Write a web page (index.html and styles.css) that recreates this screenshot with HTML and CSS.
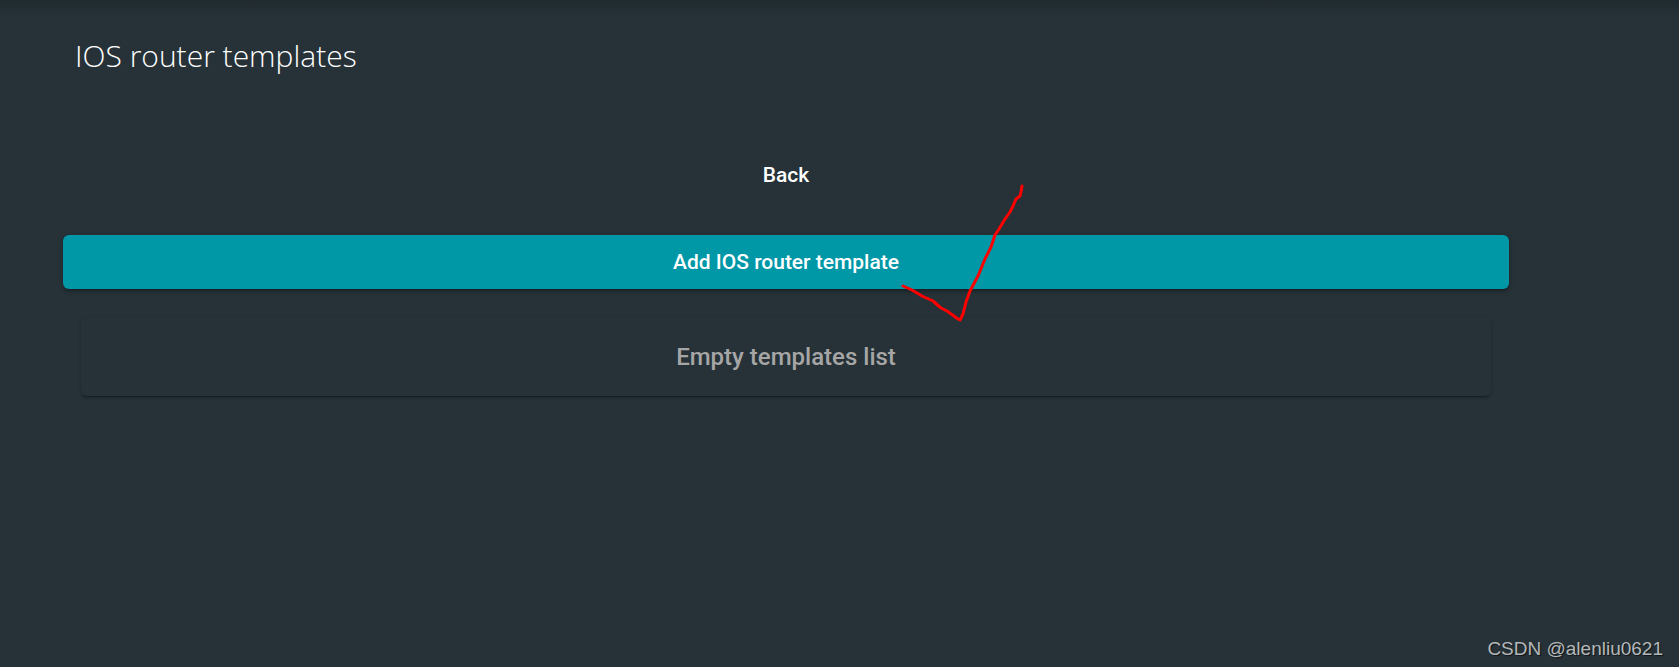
FILE: index.html
```html
<!DOCTYPE html>
<html lang="en">
  <head>
    <meta charset="utf-8">
    <meta name="viewport" content="width=device-width, initial-scale=1">
    <title>IOS router templates</title>
    <link rel="stylesheet" href="styles.css">
  </head>
  <body>
    <main class="content">
      <header class="page-header">
        <h1>IOS router templates</h1>
      </header>
      <div class="actions">
        <a href="#" class="button">Back</a>
        <button type="button" class="button button-primary">Add IOS router template</button>
        <svg class="tick" viewBox="0 0 130 138" width="130" height="138" aria-hidden="true">
          <path d="M7 100 L16 104 L26 110 L37 115 L45 122 L51 125 L58 130 L62 133 L64 134 L67 128 L70 116 L74 105 L82 90 L89 73 L95 61 L99 49 L103 43 L109 33 L114 26 L117 20 L120 13 L124 10 L125 6 L126 0"/>
        </svg>
      </div>
      <section class="card">
        <p>Empty templates list</p>
      </section>
    </main>
    <footer class="watermark">CSDN @alenliu0621</footer>
  </body>
</html>
```

FILE: styles.css
```css
* {
    box-sizing: border-box;
}

body {
    display: flex;
    flex-direction: column;
    min-height: 100vh;
    margin: 0;
    background: #263238 linear-gradient(rgba(0, 0, 0, 0.16), rgba(0, 0, 0, 0)) no-repeat 0 0 / 100% 18px;
    font-family: Roboto, sans-serif;
    color: #fff;
}

.content {
    flex: 1;
    padding: 32px 170px 0 63px;
}

.page-header {
    padding: 0 12px;
}

h1 {
    margin: 0;
    font-family: 'Segoe UI', 'Open Sans', sans-serif;
    font-size: 30px;
    font-weight: 300;
    line-height: 48px;
}

.actions {
    position: relative;
    display: flex;
    flex-direction: column;
    gap: 33px;
    margin-top: 68px;
}

.button {
    display: block;
    width: 100%;
    padding: 0 24px;
    border: 0;
    border-radius: 6px;
    background: transparent;
    font-family: inherit;
    font-size: 21px;
    font-weight: 500;
    line-height: 54px;
    text-align: center;
    text-decoration: none;
    color: #fff;
}

.button-primary {
    background: #0097a7;
    box-shadow: 0 4px 2px -3px rgba(0, 0, 0, 0.2), 0 3px 3px 0 rgba(0, 0, 0, 0.14), 0 1px 7px 0 rgba(0, 0, 0, 0.12);
}

/* hand-drawn mark pointing at the add button */
.tick {
    position: absolute;
    top: 38px;
    left: calc(50% + 110px);
    overflow: visible;
    pointer-events: none;
}

.tick path {
    fill: none;
    stroke: #f00;
    stroke-width: 3;
    stroke-linecap: round;
    stroke-linejoin: round;
}

.card {
    margin: 29px 18px 0;
    padding: 24px;
    border-radius: 6px;
    box-shadow: 0 3px 1px -2px rgba(0, 0, 0, 0.2), 0 2px 2px 0 rgba(0, 0, 0, 0.14), 0 1px 4px 0 rgba(0, 0, 0, 0.12);
}

.card p {
    margin: 0;
    font-size: 24px;
    font-weight: 500;
    line-height: 30px;
    text-align: center;
    color: #a6a6a6;
}

.watermark {
    padding: 0 16px 6px;
    font-family: 'Liberation Sans', sans-serif;
    font-size: 19px;
    line-height: 24px;
    text-align: right;
    text-shadow: 1px 1px 1px rgba(0, 0, 0, 0.6);
    color: #b4b8ba;
}
```
